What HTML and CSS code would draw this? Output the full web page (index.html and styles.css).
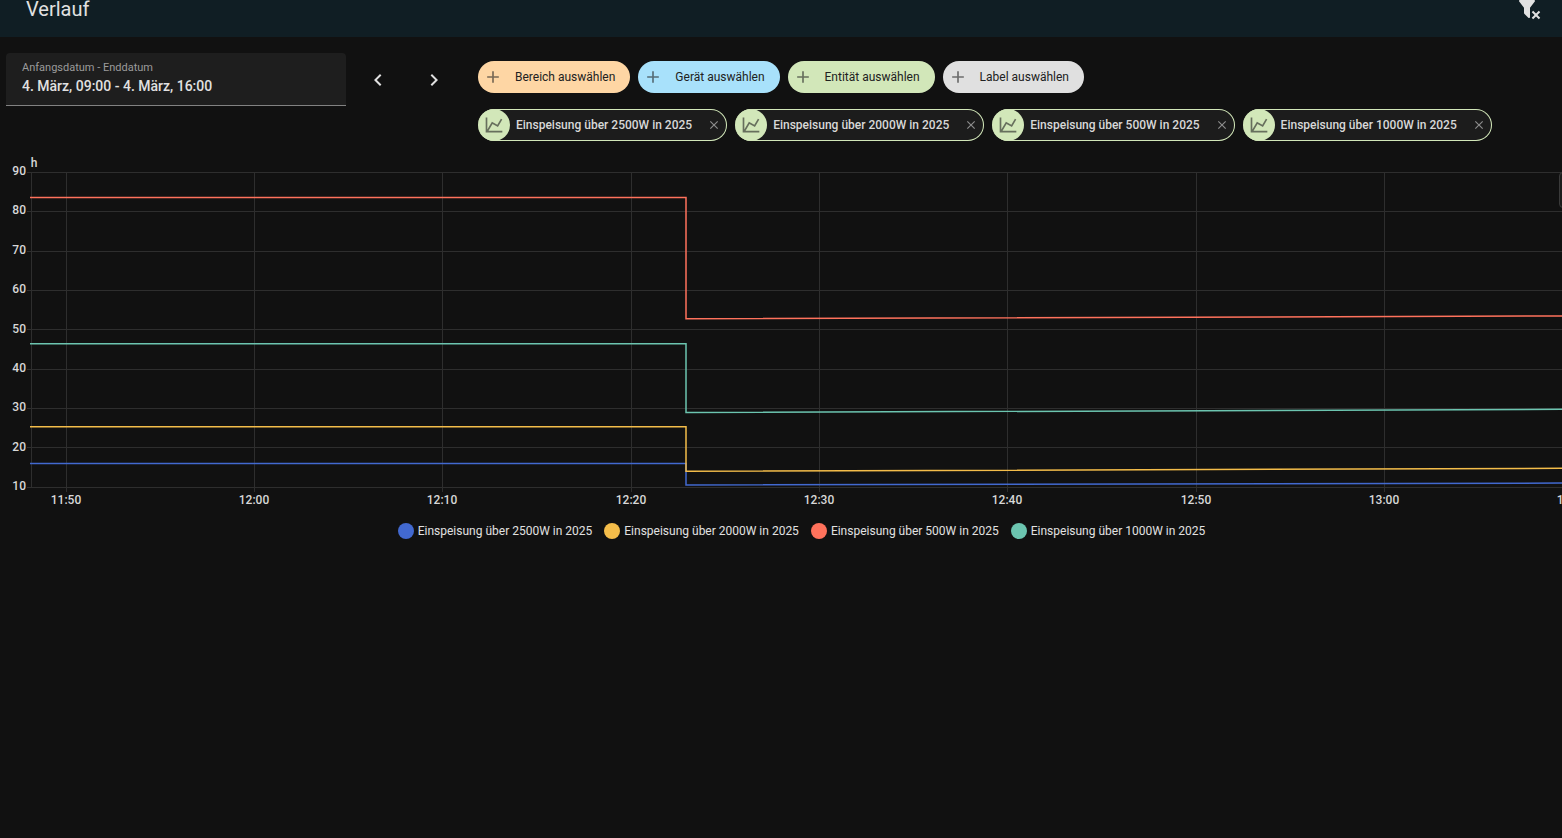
FILE: index.html
```html
<!DOCTYPE html>
<html lang="de">
<head>
  <meta charset="UTF-8">
  <meta name="viewport" content="width=device-width, initial-scale=1.0">
  <title>Verlauf</title>
  <link rel="stylesheet" href="styles.css">
</head>
<body>
  <!-- shared icons -->
  <svg class="sprite" aria-hidden="true">
    <symbol id="plus" viewBox="0 0 24 24"><path d="M19,13H13V19H11V13H5V11H11V5H13V11H19V13Z"/></symbol>
    <symbol id="close" viewBox="0 0 24 24"><path d="M19,6.41L17.59,5L12,10.59L6.41,5L5,6.41L10.59,12L5,17.59L6.41,19L12,13.41L17.59,19L19,17.59L13.41,12L19,6.41Z"/></symbol>
    <symbol id="chart-line" viewBox="0 0 24 24"><path d="M16,11.78L20.24,4.45L21.97,5.45L16.74,14.5L10.23,10.75L5.46,19H22V21H2V3H4V17.54L9.5,8L16,11.78Z"/></symbol>
  </svg>

  <header class="toolbar">
    <h1>Verlauf</h1>
    <button class="icon-button" aria-label="Filter entfernen">
      <svg viewBox="0 0 24 24"><path d="M14.73,20.83L17.58,18L14.73,15.17L16.15,13.76L19,16.57L21.8,13.76L23.22,15.17L20.41,18L23.22,20.83L21.8,22.24L19,19.4L16.15,22.24L14.73,20.83M13,19.88C13.04,20.18 12.94,20.5 12.71,20.71C12.32,21.1 11.69,21.1 11.3,20.71L7.29,16.7C7.06,16.47 6.96,16.16 7,15.87V10.75L2.21,4.62C1.87,4.19 1.95,3.56 2.38,3.22C2.57,3.08 2.78,3 3,3H17C17.22,3 17.43,3.08 17.62,3.22C18.05,3.56 18.13,4.19 17.79,4.62L13,10.75V19.88Z"/></svg>
    </button>
  </header>

  <main>
    <div class="filters">
      <div class="date-field">
        <label for="range">Anfangsdatum - Enddatum</label>
        <input type="text" id="range" value="4. März, 09:00 - 4. März, 16:00" readonly>
      </div>
      <div class="range-nav">
        <button class="icon-button" aria-label="Zurück">
          <svg viewBox="0 0 24 24"><path d="M15.41,16.58L10.83,12L15.41,7.41L14,6L8,12L14,18L15.41,16.58Z"/></svg>
        </button>
        <button class="icon-button" aria-label="Weiter">
          <svg viewBox="0 0 24 24"><path d="M8.59,16.58L13.17,12L8.59,7.41L10,6L16,12L10,18L8.59,16.58Z"/></svg>
        </button>
      </div>
      <div class="targets">
        <div class="chips">
          <button class="chip area"><svg><use href="#plus"/></svg>Bereich auswählen</button>
          <button class="chip device"><svg><use href="#plus"/></svg>Gerät auswählen</button>
          <button class="chip entity"><svg><use href="#plus"/></svg>Entität auswählen</button>
          <button class="chip label"><svg><use href="#plus"/></svg>Label auswählen</button>
        </div>
        <div class="chips">
          <div class="chip selected">
            <span class="badge"><svg><use href="#chart-line"/></svg></span>
            <span>Einspeisung über 2500W in 2025</span>
            <button class="remove" aria-label="Entfernen"><svg><use href="#close"/></svg></button>
          </div>
          <div class="chip selected">
            <span class="badge"><svg><use href="#chart-line"/></svg></span>
            <span>Einspeisung über 2000W in 2025</span>
            <button class="remove" aria-label="Entfernen"><svg><use href="#close"/></svg></button>
          </div>
          <div class="chip selected">
            <span class="badge"><svg><use href="#chart-line"/></svg></span>
            <span>Einspeisung über 500W in 2025</span>
            <button class="remove" aria-label="Entfernen"><svg><use href="#close"/></svg></button>
          </div>
          <div class="chip selected">
            <span class="badge"><svg><use href="#chart-line"/></svg></span>
            <span>Einspeisung über 1000W in 2025</span>
            <button class="remove" aria-label="Entfernen"><svg><use href="#close"/></svg></button>
          </div>
        </div>
      </div>
    </div>

    <div class="history">
      <svg class="chart" role="img" aria-label="Verlauf in Stunden">
        <g class="grid">
          <line x1="27" y1="21.5" x2="100%" y2="21.5"/>
          <line x1="27" y1="60.5" x2="100%" y2="60.5"/>
          <line x1="27" y1="100.5" x2="100%" y2="100.5"/>
          <line x1="27" y1="139.5" x2="100%" y2="139.5"/>
          <line x1="27" y1="178.5" x2="100%" y2="178.5"/>
          <line x1="27" y1="218.5" x2="100%" y2="218.5"/>
          <line x1="27" y1="257.5" x2="100%" y2="257.5"/>
          <line x1="27" y1="296.5" x2="100%" y2="296.5"/>
          <line x1="27" y1="336.5" x2="100%" y2="336.5"/>
          <path d="M31.5 21V336M66.5 21V341M254.5 21V341M442.5 21V341M631.5 21V341M819.5 21V341M1007.5 21V341M1196.5 21V341M1384.5 21V341M1572.5 21V341"/>
        </g>
        <g class="y-labels">
          <text x="26" y="24">90</text>
          <text x="26" y="63">80</text>
          <text x="26" y="103">70</text>
          <text x="26" y="142">60</text>
          <text x="26" y="182">50</text>
          <text x="26" y="221">40</text>
          <text x="26" y="260">30</text>
          <text x="26" y="300">20</text>
          <text x="26" y="339">10</text>
        </g>
        <g class="x-labels">
          <text x="34" y="16">h</text>
          <text x="66" y="353">11:50</text>
          <text x="254" y="353">12:00</text>
          <text x="442" y="353">12:10</text>
          <text x="631" y="353">12:20</text>
          <text x="819" y="353">12:30</text>
          <text x="1007" y="353">12:40</text>
          <text x="1196" y="353">12:50</text>
          <text x="1384" y="353">13:00</text>
          <text x="1572" y="353">13:10</text>
        </g>
        <g class="series">
          <path stroke="#4269d0" d="M30 312.5H686V334L1603 332"/>
          <path stroke="#f4bd4a" d="M30 275.8H686V320.3L1603 317.2"/>
          <path stroke="#ff725c" d="M30 46.5H686V167.8L1603 164.8"/>
          <path stroke="#6cc5b0" d="M30 192.8H686V261.6L1603 258.2"/>
        </g>
      </svg>
      <button class="zoom-reset" aria-label="Zoom zurücksetzen"></button>
      <ul class="legend">
        <li><i class="dot blue"></i>Einspeisung über 2500W in 2025</li>
        <li><i class="dot yellow"></i>Einspeisung über 2000W in 2025</li>
        <li><i class="dot red"></i>Einspeisung über 500W in 2025</li>
        <li><i class="dot teal"></i>Einspeisung über 1000W in 2025</li>
      </ul>
    </div>
  </main>
</body>
</html>
```
FILE: styles.css
```css
* {
  box-sizing: border-box;
}
body {
  margin: 0;
  font-family: Roboto, sans-serif;
  font-size: 12px;
  background: #111111;
  color: #e1e1e1;
  overflow-x: hidden;
}
button, input {
  font: inherit;
  color: inherit;
  border: none;
  background: none;
  padding: 0;
}
button {
  cursor: pointer;
}
svg {
  fill: currentColor;
}
.sprite {
  display: none;
}
.toolbar {
  display: flex;
  align-items: center;
  justify-content: space-between;
  height: 56px;
  margin-top: -19px;
  padding: 0 9px 0 26px;
  background: #101e24;
}
.toolbar h1 {
  margin: 0;
  font-size: 20px;
  font-weight: 400;
}
.icon-button {
  display: flex;
  align-items: center;
  justify-content: center;
  width: 48px;
  height: 48px;
}
.icon-button svg {
  width: 24px;
  height: 24px;
}
.filters {
  display: flex;
  align-items: flex-start;
  padding: 16px 6px 10px;
}
.date-field {
  display: flex;
  flex-direction: column;
  flex: 0 0 340px;
  height: 53px;
  padding: 8px 16px;
  background: #1e1e1e;
  border-bottom: 1px solid #828282;
  border-radius: 4px 4px 0 0;
}
.date-field label {
  font-size: 11px;
  line-height: 13px;
  color: #9b9b9b;
}
.date-field input {
  width: 100%;
  height: 24px;
  font-size: 14px;
  font-weight: 500;
  outline: none;
}
.range-nav {
  display: flex;
  gap: 8px;
  padding: 3px 20px 0 8px;
}
.targets {
  display: flex;
  flex-direction: column;
  gap: 16px;
  padding-top: 8px;
}
.chips {
  display: flex;
  flex-wrap: wrap;
  gap: 8px;
}
.chip {
  display: flex;
  align-items: center;
  gap: 12px;
  height: 32px;
  padding: 0 15px 0 5px;
  border-radius: 16px;
  color: #212121;
}
.chip svg {
  width: 20px;
  height: 20px;
  opacity: 0.6;
}
.area {
  background: #fed6a4;
}
.device {
  background: #a8e1fb;
}
.entity {
  background: #d2e7b9;
}
.label {
  background: #e0e0e0;
}
.selected {
  gap: 6px;
  padding: 0 5px 0 0;
  border: 1px solid #d2e7b9;
  border-left: none;
  background: #1c1c1c;
  color: #d8d8d8;
  font-weight: 500;
}
.badge {
  display: flex;
  align-items: center;
  justify-content: center;
  width: 32px;
  height: 32px;
  border-radius: 50%;
  background: #d2e7b9;
  color: #212121;
}
.remove {
  display: flex;
  margin-left: 9px;
}
.selected .remove svg {
  width: 14px;
  height: 14px;
}
.history {
  position: relative;
  margin-right: -41px;
}
.chart {
  display: block;
  width: 100%;
  height: 364px;
}
.grid {
  stroke: #2e2e2e;
  fill: none;
}
.series {
  fill: none;
  stroke-width: 1.5px;
}
.chart text {
  font-weight: 500;
  fill: #d8d8d8;
}
.y-labels {
  text-anchor: end;
}
.x-labels {
  text-anchor: middle;
}
.zoom-reset {
  position: absolute;
  top: 21px;
  right: 8px;
  width: 36px;
  height: 36px;
  border: 1px solid #3a3a3a;
  border-radius: 4px;
  background: #1c1c1c;
}
.legend {
  display: flex;
  flex-wrap: wrap;
  justify-content: center;
  gap: 12px;
  margin: 0;
  padding: 8px 0;
  list-style: none;
}
.legend li {
  display: flex;
  align-items: center;
  gap: 4px;
  line-height: 16px;
}
.dot {
  width: 16px;
  height: 16px;
  border-radius: 50%;
}
.blue {
  background: #4269d0;
}
.yellow {
  background: #f4bd4a;
}
.red {
  background: #ff725c;
}
.teal {
  background: #6cc5b0;
}
```
